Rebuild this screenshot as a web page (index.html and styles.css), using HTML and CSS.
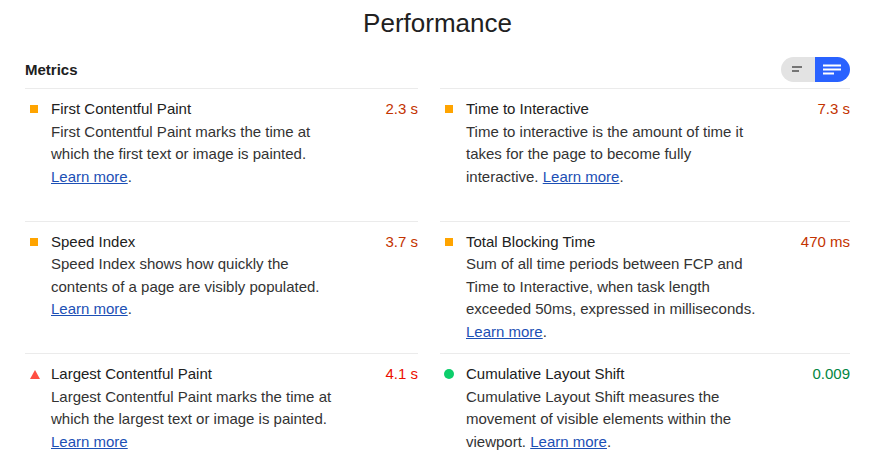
FILE: index.html
```html
<!DOCTYPE html>
<html lang="en">
<head>
<meta charset="utf-8">
<title>Performance</title>
<link rel="stylesheet" href="styles.css">
</head>
<body>
<div class="page">
  <h1 class="page-title">Performance</h1>
  <div class="metrics-header">
    <span class="metrics-label">Metrics</span>
    <div class="toggle">
      <button class="toggle-btn toggle-off" aria-label="Collapsed view">
        <svg width="34" height="25" viewBox="0 0 34 25"><path d="M11 10h10M11 14h7" stroke="#757575" stroke-width="2" fill="none"/></svg>
      </button>
      <button class="toggle-btn toggle-on" aria-label="Expanded view">
        <svg width="35" height="25" viewBox="0 0 35 25"><path d="M8 8.5h18M8 12.5h18M8 16.5h11" stroke="#fff" stroke-width="2" fill="none"/></svg>
      </button>
    </div>
  </div>
  <div class="metrics-grid">
    <div class="metric">
      <span class="metric-icon"><span class="ico-square"></span></span>
      <span class="metric-title">First Contentful Paint</span>
      <span class="metric-value average">2.3&nbsp;s</span>
      <p class="metric-desc">First Contentful Paint marks the time at which the first text or image is painted. <a href="#">Learn more</a>.</p>
    </div>
    <div class="metric">
      <span class="metric-icon"><span class="ico-square"></span></span>
      <span class="metric-title">Time to Interactive</span>
      <span class="metric-value average">7.3&nbsp;s</span>
      <p class="metric-desc">Time to interactive is the amount of time it takes for the page to become fully interactive. <a href="#">Learn more</a>.</p>
    </div>
    <div class="metric">
      <span class="metric-icon"><span class="ico-square"></span></span>
      <span class="metric-title">Speed Index</span>
      <span class="metric-value average">3.7&nbsp;s</span>
      <p class="metric-desc">Speed Index shows how quickly the contents of a page are visibly populated. <a href="#">Learn more</a>.</p>
    </div>
    <div class="metric">
      <span class="metric-icon"><span class="ico-square"></span></span>
      <span class="metric-title">Total Blocking Time</span>
      <span class="metric-value average">470&nbsp;ms</span>
      <p class="metric-desc">Sum of all time periods between FCP and Time to Interactive, when task length exceeded 50ms, expressed in milliseconds. <a href="#">Learn more</a>.</p>
    </div>
    <div class="metric">
      <span class="metric-icon"><span class="ico-triangle"></span></span>
      <span class="metric-title">Largest Contentful Paint</span>
      <span class="metric-value fail">4.1&nbsp;s</span>
      <p class="metric-desc">Largest Contentful Paint marks the time at which the largest text or image is painted. <a href="#">Learn more</a></p>
    </div>
    <div class="metric">
      <span class="metric-icon"><span class="ico-circle"></span></span>
      <span class="metric-title">Cumulative Layout Shift</span>
      <span class="metric-value pass">0.009</span>
      <p class="metric-desc">Cumulative Layout Shift measures the movement of visible elements within the viewport. <a href="#">Learn more</a>.</p>
    </div>
  </div>
</div>
</body>
</html>
```

FILE: styles.css
```css
html, body {
  margin: 0;
  padding: 0;
  background: #fff;
}

body {
  font-family: "Liberation Sans", Arial, sans-serif;
  color: #212121;
}

.page {
  padding: 8px 24px 0 25px;
}

.page-title {
  margin: 0 0 12px;
  font-size: 26px;
  line-height: 30px;
  font-weight: normal;
  text-align: center;
  color: #212121;
}

.metrics-header {
  height: 38px;
  display: flex;
  align-items: center;
  justify-content: space-between;
}

.metrics-label {
  font-size: 15px;
  font-weight: bold;
  color: #202020;
  line-height: 20px;
  margin-top: 1px;
}

.toggle {
  display: flex;
  height: 25px;
  border-radius: 13px;
  overflow: hidden;
}

.toggle-btn {
  border: 0;
  padding: 0;
  margin: 0;
  height: 25px;
  display: block;
  cursor: pointer;
}

.toggle-btn svg {
  display: block;
}

.toggle-off {
  width: 34px;
  background: #e3e3e3;
}

.toggle-on {
  width: 35px;
  background: #2962ff;
}

.metrics-grid {
  display: grid;
  grid-template-columns: 393px 410px;
  column-gap: 22px;
  grid-auto-rows: 1fr;
}

.metric {
  border-top: 1px solid #ebebeb;
  padding: 9px 0 10px;
  display: grid;
  grid-template-columns: 26px 1fr auto;
  grid-template-rows: auto auto;
  align-content: start;
  font-size: 15px;
  line-height: 22.5px;
}

.metric-icon {
  grid-column: 1;
  grid-row: 1;
  display: flex;
  align-items: center;
  justify-content: center;
  width: 12px;
  margin-left: 3px;
  height: 22.5px;
}

.ico-square {
  width: 8px;
  height: 8px;
  background: #ffa400;
}

.ico-triangle {
  width: 0;
  height: 0;
  border-left: 5.5px solid transparent;
  border-right: 5.5px solid transparent;
  border-bottom: 9px solid #ff4e42;
  margin-left: 2px;
}

.ico-circle {
  width: 10px;
  height: 10px;
  border-radius: 50%;
  background: #0cce6b;
}

.metric-title {
  grid-column: 2;
  grid-row: 1;
  color: #212121;
}

.metric-value {
  grid-column: 3;
  grid-row: 1;
  text-align: right;
}

.average { color: #c33300; }
.fail { color: #eb0f00; }
.pass { color: #018642; }

.metric-desc {
  grid-column: 2 / 4;
  grid-row: 2;
  margin: 0;
  max-width: 293px;
  color: #333333;
}

.metric-desc a {
  color: #1c4fb5;
  text-decoration: underline;
}
```
